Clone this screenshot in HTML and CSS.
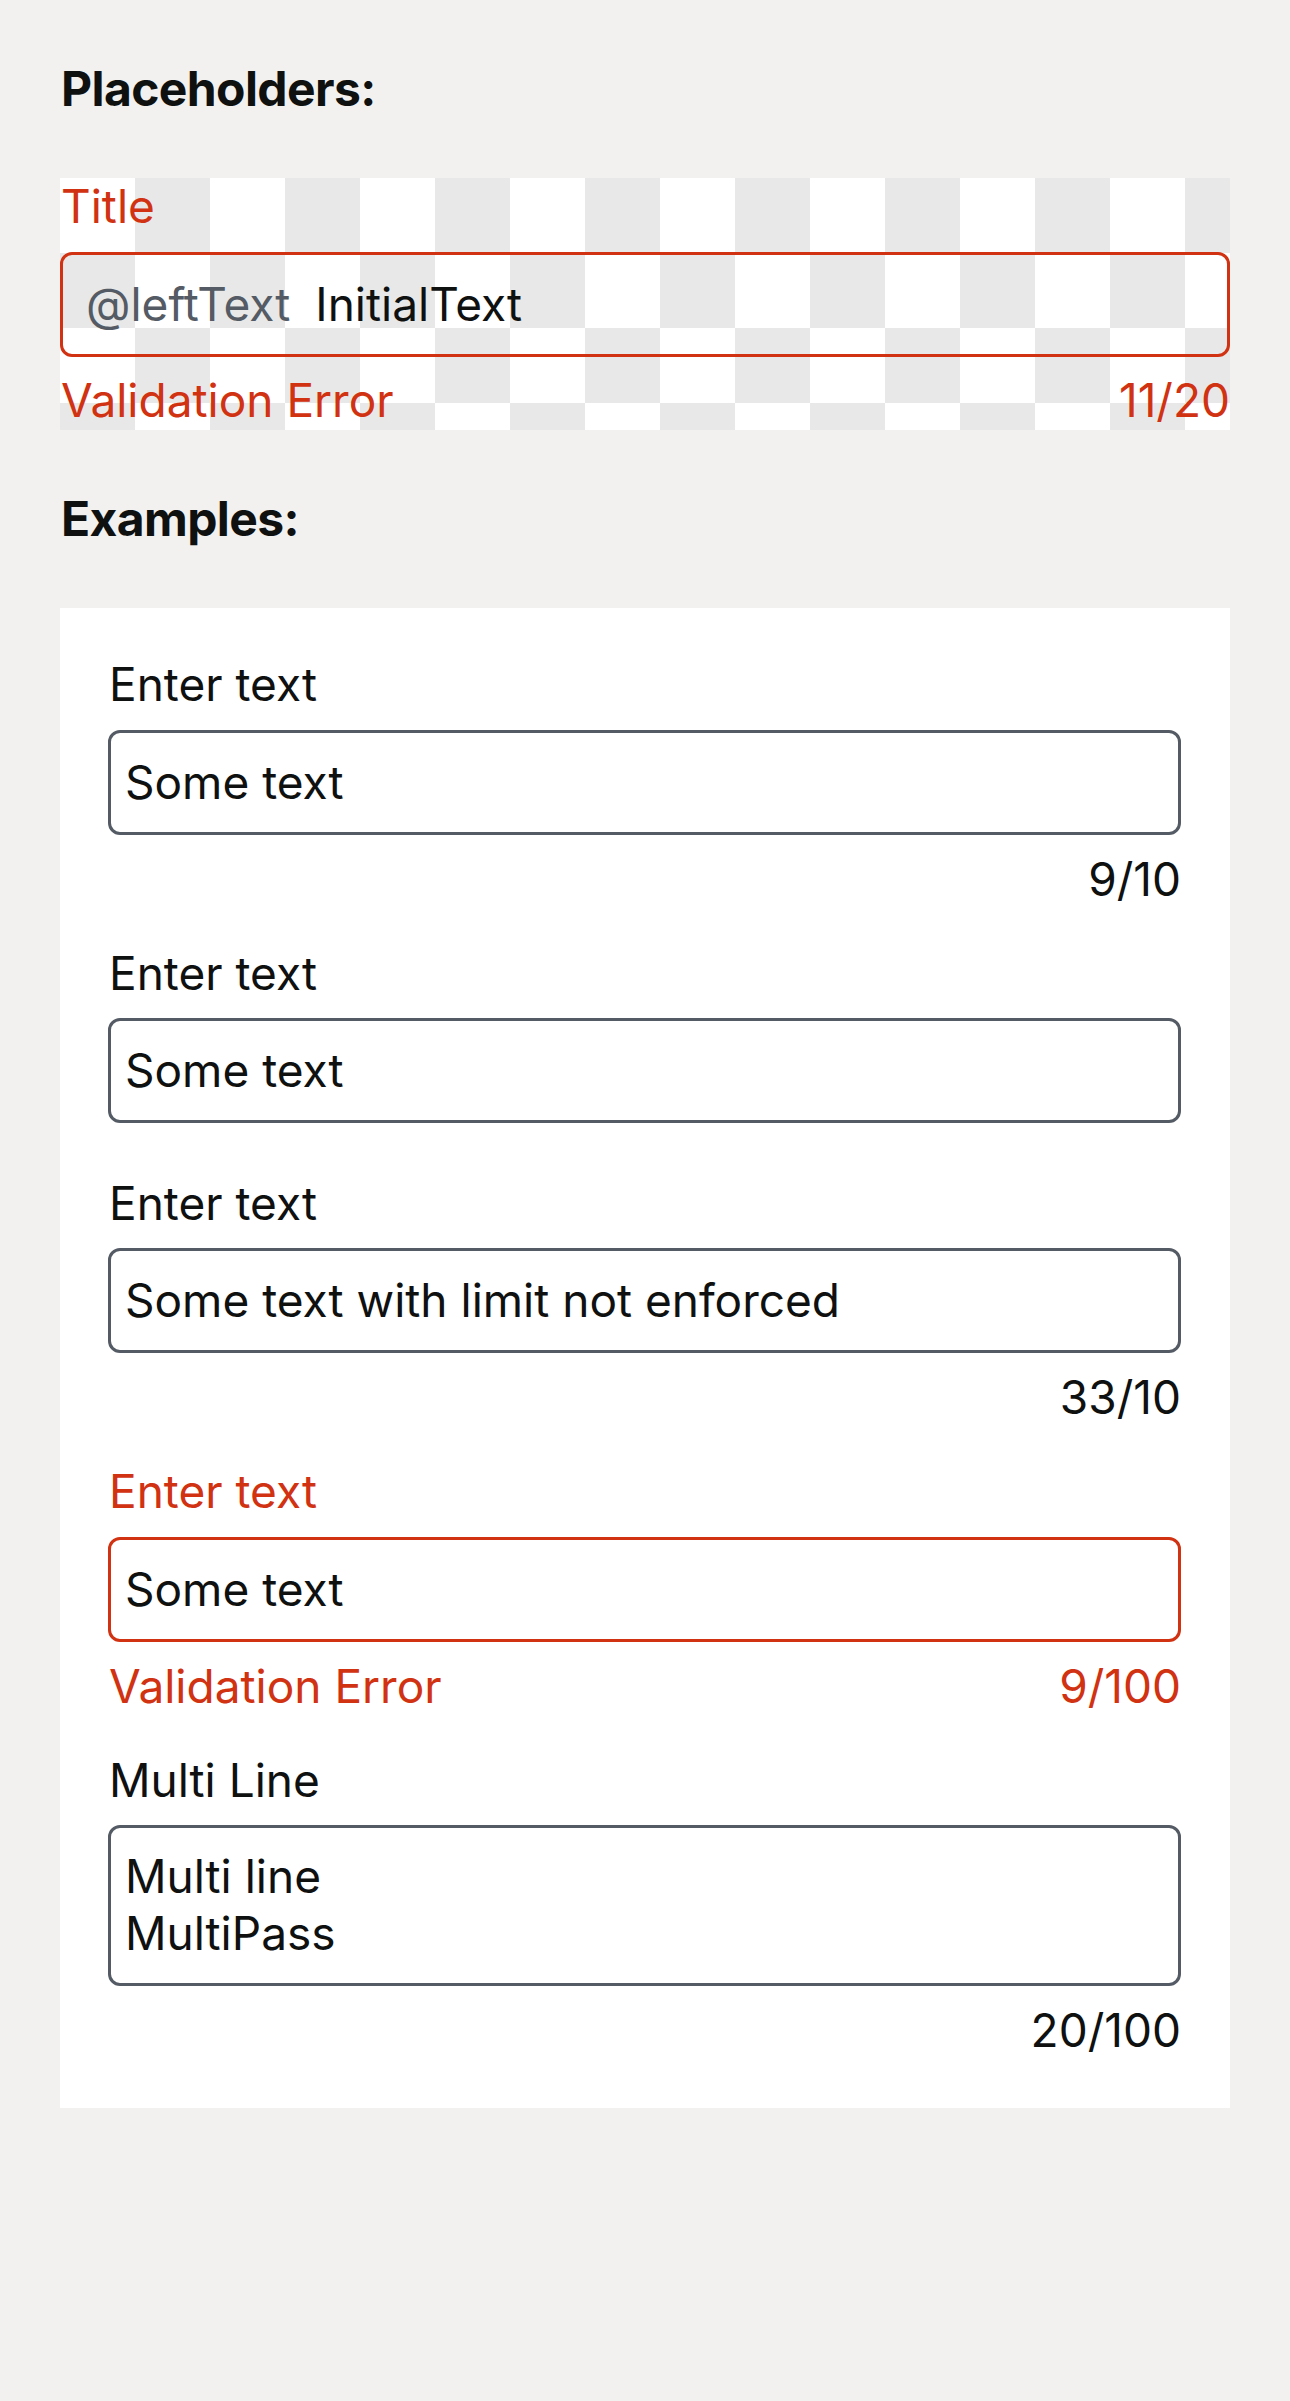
FILE: index.html
```html
<!DOCTYPE html>
<html lang="en">
<head>
<meta charset="utf-8">
<title>Text input</title>
<link rel="stylesheet" href="styles.css">
</head>
<body>
<main class="page">
  <section class="section">
    <h2 class="heading">Placeholders:</h2>
    <div class="checker">
      <div class="field field--error">
        <div class="label">Title</div>
        <div class="box box--error">
          <span class="affix">@leftText</span>
          <span class="value">InitialText</span>
        </div>
        <div class="helper helper--error">
          <span>Validation Error</span>
          <span class="count">11/20</span>
        </div>
      </div>
    </div>
  </section>

  <section class="section">
    <h2 class="heading">Examples:</h2>
    <div class="card">
      <div class="field">
        <div class="label">Enter text</div>
        <div class="box"><span class="value">Some text</span></div>
        <div class="helper"><span class="count">9/10</span></div>
      </div>

      <div class="field field--nohelper">
        <div class="label">Enter text</div>
        <div class="box"><span class="value">Some text</span></div>
      </div>

      <div class="field">
        <div class="label">Enter text</div>
        <div class="box"><span class="value">Some text with limit not enforced</span></div>
        <div class="helper"><span class="count">33/10</span></div>
      </div>

      <div class="field field--error">
        <div class="label">Enter text</div>
        <div class="box box--error"><span class="value">Some text</span></div>
        <div class="helper helper--error">
          <span>Validation Error</span>
          <span class="count">9/100</span>
        </div>
      </div>

      <div class="field field--last">
        <div class="label">Multi Line</div>
        <div class="box box--multi">
          <span class="line">Multi line</span>
          <span class="line">MultiPass</span>
        </div>
        <div class="helper"><span class="count">20/100</span></div>
      </div>
    </div>
  </section>
</main>
</body>
</html>
```

FILE: styles.css
```css
* {
  box-sizing: border-box;
}

html, body {
  margin: 0;
  padding: 0;
}

body {
  background: #f2f1f0;
  color: #0f1111;
  font-family: Inter, "Noto Sans", "Liberation Sans", sans-serif;
  font-size: 46px;
  line-height: 60px;
  min-height: 2401px;
}

.page {
  padding: 0 60px;
}

.heading {
  margin: 59px 0;
  font-size: 48px;
  line-height: 60px;
  font-weight: 700;
  letter-spacing: -0.6px;
  color: #0f1111;
  padding-left: 1px;
}

.checker {
  height: 252px;
  overflow: hidden;
  background: repeating-conic-gradient(#e8e8e8 0 25%, #ffffff 0 50%) 0 0 / 150px 150px;
}

.card {
  background: #ffffff;
  padding: 48px 49px 49px 48px;
}

.field {
  display: flex;
  flex-direction: column;
  margin-bottom: 37px;
}

.field--nohelper {
  margin-bottom: 51.5px;
}

.field--last {
  margin-bottom: 0;
}

.label {
  line-height: 57px;
  padding-left: 1px;
  margin-bottom: 16.5px;
}

.field--error .label {
  color: #d13212;
}

.box {
  height: 105px;
  border: 3px solid #545b64;
  border-radius: 12px;
  display: flex;
  align-items: center;
  padding: 0 14px 1px;
  white-space: nowrap;
}

.box--error {
  border-color: #d13212;
}

.checker .box {
  padding-left: 23px;
}

.affix {
  color: #545b64;
  margin-right: 25px;
}

.box--multi {
  height: 161px;
  flex-direction: column;
  align-items: flex-start;
  justify-content: flex-start;
  padding: 19.5px 14px;
  line-height: 57px;
}

.helper {
  display: flex;
  justify-content: space-between;
  margin-top: 16px;
  line-height: 57px;
  padding-left: 1px;
}

.checker .helper {
  margin-top: 15px;
}

.helper--error {
  color: #d13212;
}

.count {
  margin-left: auto;
}
```
